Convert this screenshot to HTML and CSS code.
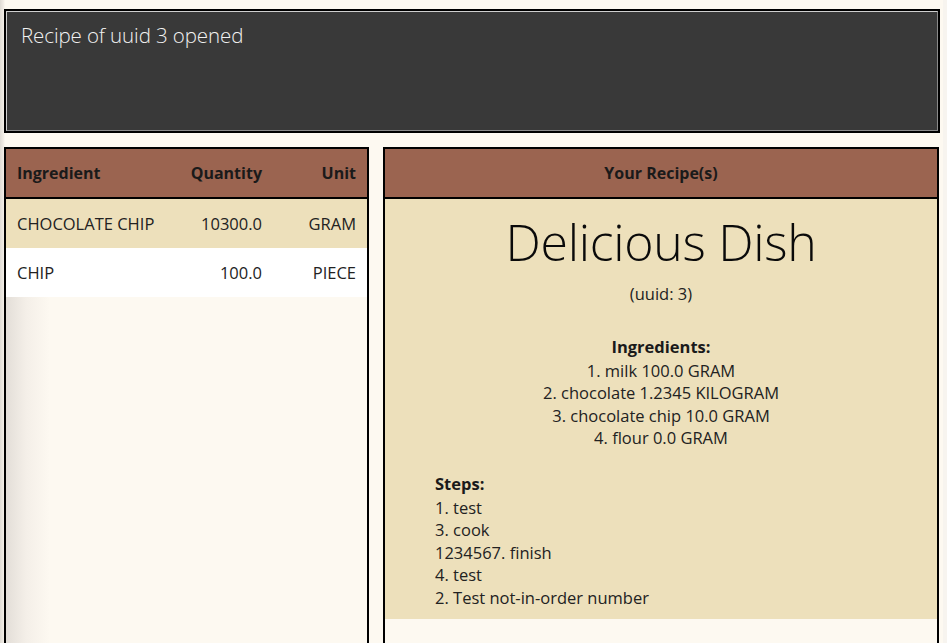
FILE: index.html
```html
<!DOCTYPE html>
<html>
<head>
<meta charset="utf-8">
<link rel="stylesheet" href="styles.css">
</head>
<body>
<div class="app">
  <div class="result-box">
    <div class="result-inner">Recipe of uuid 3 opened</div>
  </div>
  <div class="panels">
    <div class="panel left-panel">
      <div class="table-head">
        <span class="col-name">Ingredient</span>
        <span class="col-qty">Quantity</span>
        <span class="col-unit">Unit</span>
      </div>
      <div class="table-row row-alt">
        <span class="col-name">CHOCOLATE CHIP</span>
        <span class="col-qty">10300.0</span>
        <span class="col-unit">GRAM</span>
      </div>
      <div class="table-row">
        <span class="col-name">CHIP</span>
        <span class="col-qty">100.0</span>
        <span class="col-unit">PIECE</span>
      </div>
      <div class="table-empty"></div>
    </div>
    <div class="panel right-panel">
      <div class="recipe-head">Your Recipe(s)</div>
      <div class="recipe-card">
        <div class="recipe-title">Delicious Dish</div>
        <div class="recipe-uuid">(uuid: 3)</div>
        <div class="recipe-section">
          <div class="section-label">Ingredients:</div>
          <div>1. milk 100.0 GRAM</div>
          <div>2. chocolate 1.2345 KILOGRAM</div>
          <div>3. chocolate chip 10.0 GRAM</div>
          <div>4. flour 0.0 GRAM</div>
        </div>
        <div class="recipe-steps">
          <div class="section-label">Steps:</div>
          <div>1. test</div>
          <div>3. cook</div>
          <div>1234567. finish</div>
          <div>4. test</div>
          <div>2. Test not-in-order number</div>
        </div>
      </div>
      <div class="recipe-rest"></div>
    </div>
  </div>
</div>
</body>
</html>
```

FILE: styles.css
```css
html, body {
  margin: 0;
  padding: 0;
  height: 100%;
  overflow: hidden;
}
body {
  background: linear-gradient(to right, #dedad3 0px, #f4efe8 4px, #fdf9f1 5px, #fdf9f1 943px, #f7f4ef 943px);
  font-family: "Open Sans", "Noto Sans", sans-serif;
  color: #1e1e1e;
}
.app {
  display: flex;
  flex-direction: column;
  padding: 9px 7px 0 4px;
  gap: 14px;
}
.result-box {
  height: 124px;
  box-sizing: border-box;
  border: 2px solid #000;
}
.result-inner {
  height: 100%;
  box-sizing: border-box;
  border: 1px solid;
  border-color: #cfcfcf #8a8a8a #8a8a8a #cfcfcf;
  background: #393939;
  color: #f2f2f2;
  font-weight: 300;
  font-size: 20.5px;
  padding: 9px 14px;
  letter-spacing: -0.1px;
}
.panels {
  display: flex;
  gap: 14px;
  margin-right: 1px;
}
.panel {
  border: 2px solid #000;
  height: 520px;
  box-sizing: border-box;
  display: flex;
  flex-direction: column;
}
.left-panel {
  width: 365px;
  flex: none;
}
.right-panel {
  flex: 1;
}
.table-head, .recipe-head {
  height: 50px;
  box-sizing: border-box;
  background: #9b6450;
  border-bottom: 2px solid #000;
  font-weight: 700;
  font-size: 16px;
  color: #1a1a1a;
  display: flex;
  align-items: center;
}
.table-head, .table-row {
  display: grid;
  grid-template-columns: 1fr 90px 94px;
  padding: 0 11px 0 11px;
  align-items: center;
}
.table-row {
  height: 49px;
  font-size: 16.5px;
  background: #fff;
  color: #222;
}
.row-alt {
  background: #ede0bb;
}
.col-qty, .col-unit {
  text-align: right;
}
.table-empty {
  flex: 1;
  background: linear-gradient(to right, #e3ded8 0px, #f4efe8 20px, #fdf9f1 44px);
}
.recipe-head {
  justify-content: center;
}
.recipe-card {
  height: 420px;
  background: #ede0bb;
  box-sizing: border-box;
  font-size: 16.5px;
  line-height: 22.5px;
  color: #222;
  padding-top: 10px;
}
.recipe-title {
  text-align: center;
  font-weight: 300;
  font-size: 50px;
  line-height: 66px;
  color: #0a0a0a;
  letter-spacing: -0.3px;
}
.recipe-uuid {
  text-align: center;
  margin-top: 8px;
}
.recipe-section {
  text-align: center;
  margin-top: 30px;
}
.section-label {
  font-weight: 700;
  color: #1a1a1a;
  margin-bottom: 1.5px;
}
.recipe-steps {
  margin-top: 23px;
  padding-left: 50px;
}
.recipe-rest {
  flex: 1;
  background: #fdf9f1;
}
```
